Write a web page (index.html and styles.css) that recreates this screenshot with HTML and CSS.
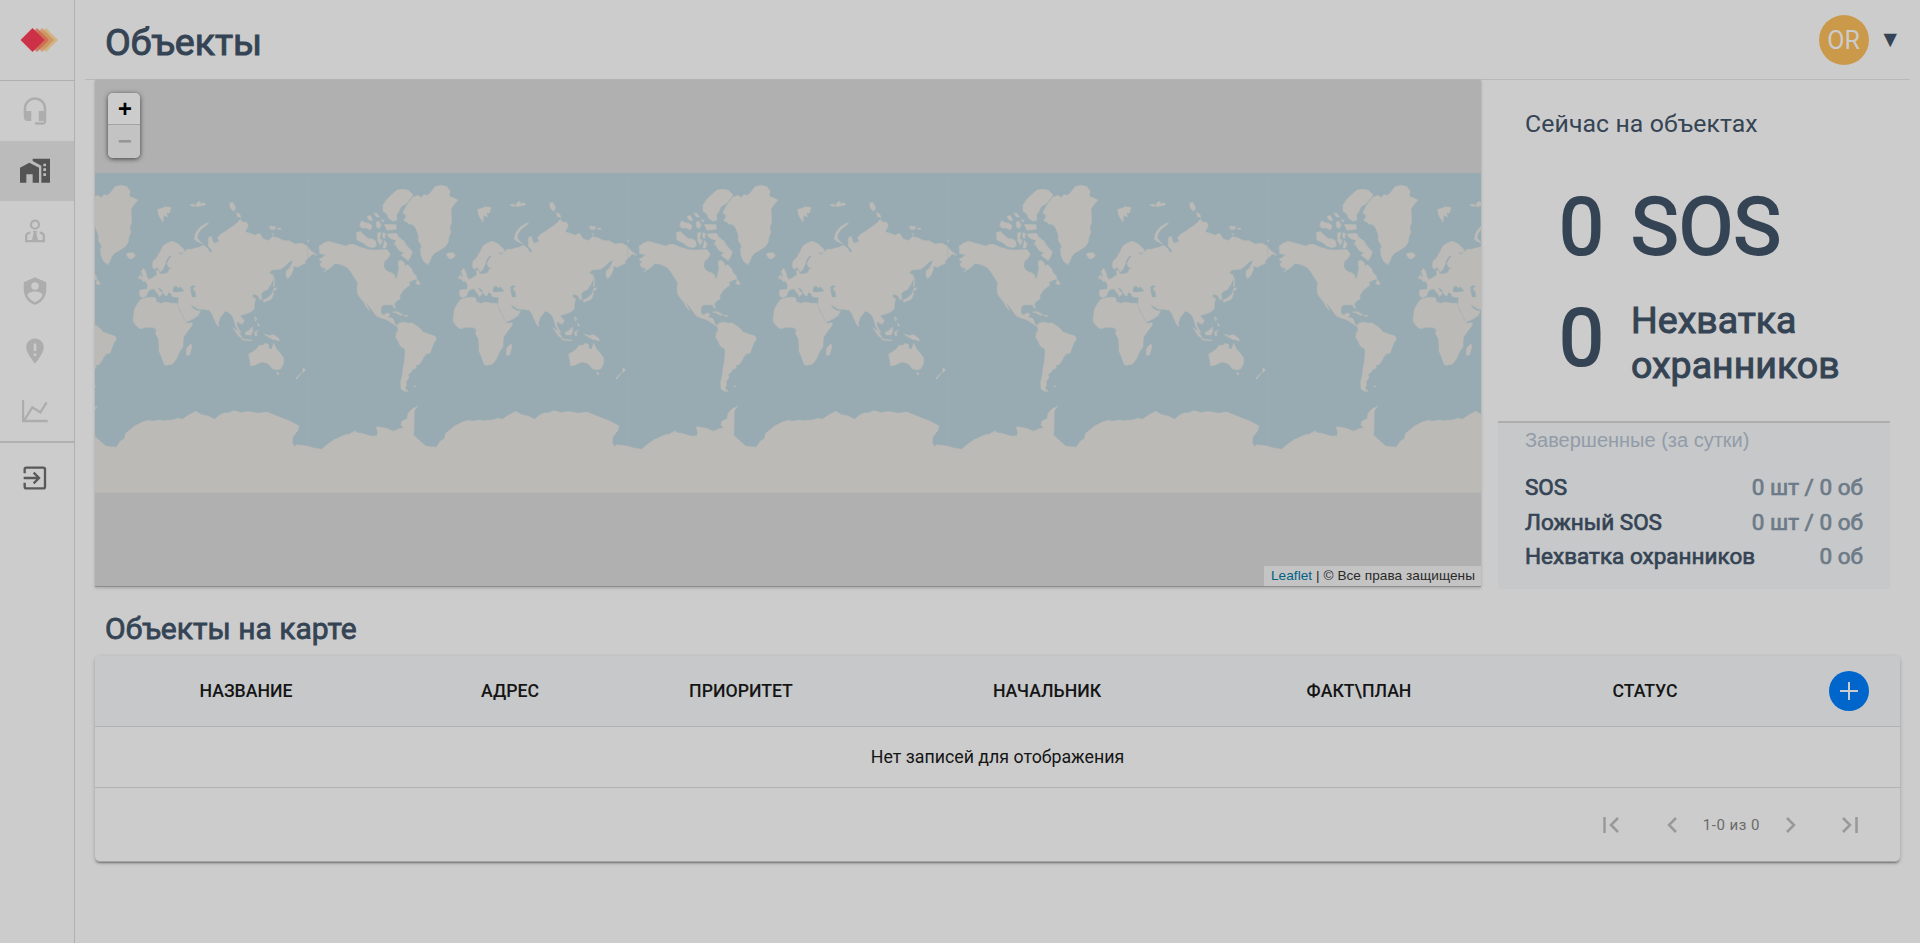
FILE: index.html
```html
<!DOCTYPE html>
<html lang="ru">
<head>
<meta charset="utf-8">
<title>Объекты</title>
<link rel="stylesheet" href="styles.css">
</head>
<body>
<div class="app">
  <nav class="sidebar">
    <a class="logo">
      <svg width="38" height="24" viewBox="0 0 38 24">
        <path d="M26 0L38 12L26 24L14 12Z" fill="#d3ab72" opacity=".75"/>
        <path d="M22 0L34 12L22 24L10 12Z" fill="#cf8b50" opacity=".7"/>
        <path d="M17 0L29 12L17 24L5 12Z" fill="#cd6450" opacity=".8"/>
        <path d="M12.500 0L24.500 12L12.500 24L.5 12Z" fill="#cc3147"/>
      </svg>
    </a>
    <a class="nav-item">
      <svg width="30" height="30" viewBox="0 0 24 24"><path d="M12 1c-4.970 0-9 4.030-9 9v7c0 1.660 1.340 3 3 3h3v-8H5v-2c0-3.870 3.130-7 7-7s7 3.130 7 7v2h-4v8h4v1h-7v2h6c1.660 0 3-1.340 3-3V10c0-4.970-4.030-9-9-9z"/></svg>
    </a>
    <a class="nav-item active">
      <svg width="30" height="26" viewBox="60 473 90 78"><path fill-rule="evenodd" d="M60 502L88 487L117 502V547H98V522H79V547H60ZM98 475H150V547H124V496L98 482ZM130 490v8h8v-8zM130 504v8h8v-8zM130 519v8h8v-8z"/></svg>
    </a>
    <a class="nav-item">
      <svg width="20" height="24" viewBox="75 657 60 72"><circle cx="105" cy="674" r="12" fill="none" stroke="#adadad" stroke-width="6.500"/><path d="M98 693H112L109 699L114 720H135V727H75V720H96L101 699Z"/><path d="M91 698Q78.500 700 78.500 709V724M119 698Q131.500 700 131.500 709V724" fill="none" stroke="#adadad" stroke-width="7"/></svg>
    </a>
    <a class="nav-item">
      <svg width="30" height="30" viewBox="0 0 24 24"><path d="M12 1L3 5V11C3 16.550 6.840 21.740 12 23C17.160 21.740 21 16.550 21 11V5L12 1M12 5A3 3 0 0 1 15 8A3 3 0 0 1 12 11A3 3 0 0 1 9 8A3 3 0 0 1 12 5M17.130 17C15.920 18.850 14.110 20.240 12 20.920C9.890 20.240 8.080 18.850 6.870 17C6.530 16.500 6.240 16 6 15.470C6 13.820 8.710 12.470 12 12.470C15.290 12.470 18 13.790 18 15.470C17.760 16 17.470 16.500 17.130 17Z"/></svg>
    </a>
    <a class="nav-item">
      <svg width="30" height="30" viewBox="0 0 24 24"><path fill-rule="evenodd" d="M12 2C8.100 2 5 5.100 5 9c0 5.200 7 13 7 13s7-7.800 7-13c0-3.900-3.100-7-7-7zM11 6h2v6h-2zM11 14h2v2h-2z"/></svg>
    </a>
    <a class="nav-item">
      <svg width="26" height="24" viewBox="66 447 78 72"><path d="M69 450V513H143M72 512L97 472L121 487L140 457" fill="none" stroke="#adadad" stroke-width="7"/></svg>
    </a>
    <a class="nav-item exit">
      <svg width="24" height="24" viewBox="69 648 72 72"><path d="M74 670V658Q74 653 79 653H130Q135 653 135 658V710Q135 715 130 715H79Q74 715 74 710V698M71 684H117M101 668L117 684L101 700" fill="none" stroke="#595959" stroke-width="7"/></svg>
    </a>
  </nav>
  <div class="page">
    <header class="topbar">
      <h1>Объекты</h1>
      <div class="user"><span class="avatar">OR</span><span class="caret">▼</span></div>
    </header>
    <main>
      <section class="overview">
        <div class="map">
          <svg class="world" width="1386" height="320" viewBox="0 0 1386 320">
            <defs>
              <g id="world" fill="#bbbab6" stroke="#bbbab6" stroke-width="1.500" stroke-linejoin="round">
                <path d="M37 222L50 213 65 208 85 214 118 222 128 217 140 217 160 226 190 234 215 234 238 232 246 240 250 248 240 262 232 268 230 285 238 296 255 303 262 308 265 319 270 318 272 305 276 290 273 270 280 264 290 270 295 282 302 278 314 290 318 302 328 312 330 322 318 324 306 330 308 340 300 345 292 352 285 360 278 372 280 380 268 388 262 396 266 410 260 406 256 398 238 398 226 400 222 410 222 424 230 430 238 424 247 424 248 430 242 436 255 438 262 448 262 456 270 460 278 458 276 464 264 460 250 450 236 442 222 438 208 432 198 418 186 402 176 390 188 416 180 408 170 390 160 378 152 366 150 350 152 332 146 322 138 310 130 298 120 286 108 280 95 276 84 274 76 282 66 290 50 300 58 290 44 286 38 276 46 270 36 262 50 254 54 248 38 244Z"/>
                <path d="M326 335L332 322 340 336 334 338ZM240 186L268 184 275 196 290 206 300 222 316 240 310 256 304 266 290 256 282 248 292 244 274 234 268 222 262 215 268 205 252 200 246 196ZM148 182L160 178 172 190 184 200 196 200 206 208 208 222 196 228 180 222 168 212 150 204ZM212 182L222 182 218 200 226 205 220 220 212 205ZM227 182L235 184 234 198 228 198ZM232 205L240 215 236 228 228 228Z"/>
                <path d="M228 100L238 84 256 66 270 54 288 52 304 55 318 68 308 84 296 96 282 104 276 118 268 130 270 144 260 148 246 140 238 124 228 118ZM232 157L267 158 268 172 240 175ZM158 160L164 146 174 152 186 154 196 162 190 174 178 168 164 168ZM200 122L212 126 218 136 208 134ZM180 134L190 130 198 146 186 144ZM208 150L216 148 222 160 216 170 208 164ZM222 142L232 146 228 151Z"/>
                <path d="M292 112L302 96 318 76 334 70 342 77 350 68 362 70 374 58 384 44 402 40 420 44 430 58 426 72 440 78 452 84 440 100 432 110 434 150 428 166 432 180 426 194 424 210 414 224 396 236 384 242 374 254 368 270 362 278 350 268 342 250 340 232 344 222 334 206 334 190 326 168 318 158 306 156 300 150 290 146 298 132 288 122ZM418 246L428 242 440 243 445 252 434 261 424 258Z"/>
                <path d="M256 420L272 419 288 429 280 430 270 424ZM290 429L304 431 296 434Z"/>
                <path d="M270 462L276 454 290 450 300 453 316 453 326 460 340 470 348 480 364 486 384 492 388 502 380 514 374 530 370 542 358 546 350 556 344 568 336 578 326 580 328 588 318 592 312 600 304 608 306 618 298 628 298 640 294 648 303 658 292 658 282 650 281 630 286 610 288 590 292 570 294 550 294 532 280 522 274 508 266 496 268 482 274 474ZM320 642h7v2h-7z"/>
                <path d="M0 822L20 828 44 832 60 818 80 804 110 790 128 786 144 776 150 782 165 784 190 792 210 792 212 782 208 764 236 768 260 778 276 770 290 768 282 760 284 748 300 740 304 722 316 710 332 703 322 716 320 790 340 808 356 822 370 824 388 826 400 808 412 800 416 784 440 764 466 750 484 745 496 748 516 744 532 746 556 744 572 739 586 742 604 730 626 718 644 728 664 732 682 742 700 728 714 722 724 723 740 716 750 718 762 722 784 718 798 721 814 724 839 720 864 730 884 738 910 748 936 762 932 776 918 794 916 812 922 824 930 818 960 822V962H0Z"/>
                <g transform="translate(444)">
                  <path d="M14 354L36 352 38 340 32 326 48 320 58 314 66 308 64 296 70 294 74 306 84 306 98 302 104 290 114 290 100 284 96 274 104 260 110 252 104 250 94 264 90 278 84 292 76 300 68 286 58 292 52 284 54 268 66 256 76 238 84 222 98 212 112 208 130 216 148 234 144 242 130 240 138 248 150 238 158 232 170 232 192 226 206 220 216 228 226 242 232 238 220 222 220 198 228 192 236 214 252 210 248 196 258 186 272 178 290 165 306 154 316 142 322 150 334 150 340 162 330 180 346 184 360 190 374 184 384 200 400 206 412 194 430 198 446 206 462 206 480 216 500 214 516 222 528 236 546 250 532 246 526 252 516 262 510 266 512 274 496 280 490 286 476 282 474 296 466 312 458 320 453 310 454 296 464 288 472 272 474 264 462 270 448 284 436 292 410 294 402 304 414 308 414 322 408 336 398 352 386 358 378 366 381 380 374 383 370 372 362 368 354 366 352 374 362 380 358 396 358 410 348 420 332 426 322 428 316 432 328 446 322 456 312 452 306 446 306 462 318 482 312 482 302 462 298 448 292 432 280 420 270 418 256 436 250 452 252 463 246 460 238 442 230 424 222 414 204 412 190 412 178 404 167 396 174 410 186 416 196 418 190 430 176 440 154 450 146 436 138 418 128 400 130 390 132 376 112 374 108 364 100 360 96 372 88 368 80 352 68 344 72 354 82 364 74 374 66 362 56 350 48 352 40 358 34 372 24 377 14 372Z"/>
                  <path d="M18 382L40 376 58 376 64 380 62 388 76 394 92 390 108 394 126 394 128 404 138 424 148 444 156 454 173 452 170 462 158 478 146 494 144 512 144 524 132 542 124 562 112 576 96 580 88 578 80 556 72 536 72 518 70 500 62 486 64 472 52 466 34 466 16 470 4 462-6 448-4 430-2 412 8 394Z"/>
                  <path d="M158 524L168 516 171 524 164 548 154 550 154 534ZM18 322L24 312 19 298 26 289 32 300 36 314 41 322 34 328 24 328ZM10 317L17 308 20 316 14 322ZM68 112L84 108 90 104 108 106 104 122 94 124 98 134 86 130 84 150 74 136 70 126ZM178 202L182 182 196 164 220 151 218 157 200 170 190 184 186 198 202 216 186 208Z"/>
                  <path d="M164 98L176 97 182 102 172 103ZM186 92L194 88 198 96 208 92 212 98 196 102 186 104 182 98ZM284 92L294 92 302 108 296 118 286 108ZM304 122L314 126 318 136 308 134ZM404 163L422 164 420 172 406 172ZM426 170L438 168 436 173ZM413 184L418 188 413 188ZM516 205L523 207 518 209Z"/>
                  <path d="M384 384L398 378 410 366 413 358 415 368 410 380 398 386 386 391ZM415 350L426 347 422 354 416 357ZM416 314L419 320 418 344 416 344ZM358 433L366 440 362 448ZM368 452L376 462 368 461ZM330 482L344 474 352 464 353 478 348 489 334 489ZM294 467L304 474 316 488 321 498 310 492ZM320 500L352 505 350 507 320 503ZM359 480L371 475 364 482 366 492 360 491ZM388 487L404 491 416 488 430 498 434 507 424 504 412 502 400 495Z"/>
                  <path d="M341 547L352 540 364 532 372 520 384 520 390 514 402 518 400 528 410 532 414 520 416 514 424 530 436 544 446 558 446 574 438 590 424 594 412 590 406 582 396 574 384 570 370 574 362 579 347 582 345 566ZM424 602L432 602 429 610ZM504 587L512 594 502 602ZM500 602L486 621 482 619Z"/>
                  <g fill="#98abb2" stroke="none"><path d="M113 358L116 344 124 342 130 348 138 344 148 358 134 359 120 361ZM166 346L174 340 181 342 174 350 182 362 182 375 172 376 168 364Z"/></g>
                </g>
              </g>
            </defs>
            <rect width="1386" height="320" fill="#98abb2"/>
            <g transform="scale(.33333) translate(0 -3)">
              <use href="#world" x="-324"/><use href="#world" x="636"/><use href="#world" x="1596"/><use href="#world" x="2556"/><use href="#world" x="3516"/>
            </g>
            <path d="M212.500 0V273M532.500 0V273M852.500 0V273M1172.500 0V273" stroke="#a2afb3" stroke-width="1" opacity=".4"/>
          </svg>
          <div class="zoom"><button class="zoom-in">+</button><button class="zoom-out">−</button></div>
          <div class="attribution"><a>Leaflet</a> | © Все права защищены</div>
        </div>
        <aside class="stats">
          <h2>Сейчас на объектах</h2>
          <div class="big-row"><b class="count">0</b><b class="sos">SOS</b></div>
          <div class="big-row second"><b class="count">0</b><b class="short">Нехватка<br>охранников</b></div>
          <div class="done">
            <h3>Завершенные (за сутки)</h3>
            <div class="line"><span>SOS</span><span class="val">0 шт / 0 об</span></div>
            <div class="line"><span>Ложный SOS</span><span class="val">0 шт / 0 об</span></div>
            <div class="line"><span>Нехватка охранников</span><span class="val">0 об</span></div>
          </div>
        </aside>
      </section>
      <h2 class="section-title">Объекты на карте</h2>
      <section class="card">
        <div class="thead">
          <span>НАЗВАНИЕ</span><span>АДРЕС</span><span>ПРИОРИТЕТ</span><span>НАЧАЛЬНИК</span><span>ФАКТ\ПЛАН</span><span>СТАТУС</span>
          <button class="add"><svg width="18" height="18" viewBox="0 0 18 18"><path d="M9 0V18M0 9H18" stroke="#ccc" stroke-width="2"/></svg></button>
        </div>
        <div class="empty">Нет записей для отображения</div>
        <div class="pager">
          <svg width="16" height="16" viewBox="0 0 16 16"><path d="M1.500 0V16M15 1L8 8L15 15"/></svg>
          <svg width="10" height="16" viewBox="0 0 10 16"><path d="M9 1L2 8L9 15"/></svg>
          <span>1-0 из 0</span>
          <svg width="10" height="16" viewBox="0 0 10 16"><path d="M1 1L8 8L1 15"/></svg>
          <svg width="16" height="16" viewBox="0 0 16 16"><path d="M14.500 0V16M1 1L8 8L1 15"/></svg>
        </div>
      </section>
    </main>
  </div>
</div>
</body>
</html>
```
FILE: styles.css
```css
* { box-sizing: border-box; }
body { margin: 0; background: #ccc; font-family: Roboto, "Liberation Sans", sans-serif; color: #354454; }
h1, h2, h3 { margin: 0; font-weight: 400; }
button { border: 0; padding: 0; font: inherit; }
svg { display: block; flex: none; }
.app { display: flex; height: 943px; overflow: hidden; }
.sidebar { width: 75px; border-right: 1px solid #b0b0b0; flex: none; }
.logo { display: flex; height: 81px; padding: 28px 0 0 20px; border-bottom: 1px solid #b0b0b0; }
.nav-item { display: flex; align-items: center; justify-content: center; height: 60px; padding-right: 4px; fill: #adadad; }
.nav-item.active { background: #bbb; fill: #545454; }
.nav-item.exit { border-top: 2px solid #b0b0b0; height: 72px; }
.page { flex: 1; padding: 0 10px; }
.topbar { display: flex; justify-content: space-between; align-items: center; height: 80px; padding: 0 13px 0 20px; border-bottom: 1px solid #b9b9b9; }
.topbar h1 { font-size: 37.5px; line-height: 50px; padding-top: 4px; -webkit-text-stroke: 1px; }
.user { display: flex; align-items: center; gap: 15px; }
.avatar { width: 50px; height: 50px; border-radius: 50%; background: #cb994a; color: #ccc; font-size: 25px; line-height: 51px; text-align: center; }
.caret { font: 17.5px/20px "DejaVu Sans", sans-serif; padding-bottom: 2px; }
main { padding: 0 10px; }
.overview { display: flex; height: 509px; }
.map { position: relative; width: 1386px; height: 507px; background: #b0b0b0; padding-top: 93px; overflow: hidden; flex: none; border-bottom: 1px solid #8d8d8d; box-shadow: 0 1px 3px rgba(0,0,0,.2); }
.zoom { position: absolute; left: 13px; top: 13px; width: 32px; height: 65px; border-radius: 5px; overflow: hidden; background: #ccc; box-shadow: 0 1px 5px rgba(0,0,0,.65); }
.zoom button { display: block; width: 32px; height: 32px; padding: 3px 0 0 2px; font: bold 24px/30px "Liberation Mono", monospace; color: #000; background: #ccc; text-align: center; }
.zoom .zoom-in { border-bottom: 1px solid #a3a3a3; }
.zoom .zoom-out { height: 33px; background: #c3c3c3; color: #959595; }
.attribution { position: absolute; right: 0; bottom: 0; padding: 0 6px 0 7px; height: 20px; background: #c4c4c4; font: 13.6px/19px "Liberation Sans", sans-serif; letter-spacing: .06px; color: #292929; white-space: nowrap; }
.attribution a { color: #006284; }
.stats { margin-left: 17px; width: 392px; display: flex; flex-direction: column; }
.stats h2 { font-size: 24.8px; line-height: 30px; padding: 29px 0 0 27px; height: 85px; letter-spacing: .1px; }
.big-row { display: flex; padding-left: 61px; height: 111px; }
.count, .sos { font-size: 80px; line-height: 124px; font-weight: 400; -webkit-text-stroke: 2px; }
.count { width: 72px; }
.big-row.second { height: 145px; }
.short { font-size: 37.5px; line-height: 45px; font-weight: 400; padding-top: 22px; -webkit-text-stroke: 1px; }
.done { height: 168px; background: #c6c8ca; border-top: 2px solid #adadad; padding: 4px 27px 0; }
.done h3 { font: 20px/26px "Liberation Sans", sans-serif; color: #929ca8; margin-bottom: 17px; }
.line { display: flex; justify-content: space-between; font-size: 22.5px; line-height: 34.5px; -webkit-text-stroke: .7px; }
.val { color: #6d7b88; }
.section-title { font-size: 30px; line-height: 40px; padding: 20px 0 0 10px; height: 67px; -webkit-text-stroke: .8px; }
.card { height: 206px; border-radius: 5px; border-bottom: 1px solid #a5a5a5; box-shadow: 0 2px 2px -1px rgba(0,0,0,.35), 0 1px 4px rgba(0,0,0,.2); overflow: hidden; color: #151515; }
.thead { display: grid; grid-template-columns: 302px 226px 236px 376px 248px 324px 84px; align-items: center; justify-items: center; height: 71px; background: #c6c8ca; border-bottom: 1px solid #b3b3b5; font-size: 17.7px; font-weight: 500; }
.thead span { padding-bottom: 1px; }
.add { width: 40px; height: 40px; border-radius: 50%; background: #0066cc; display: flex; align-items: center; justify-content: center; }
.empty { height: 61px; line-height: 60px; text-align: center; font-size: 17.8px; border-bottom: 1px solid #b3b3b5; }
.pager { display: flex; align-items: center; justify-content: flex-end; height: 74px; padding-right: 42px; }
.pager path { fill: none; stroke: #999; stroke-width: 2.500; }
.pager svg:nth-of-type(2) { margin-left: 48px; }
.pager svg:nth-of-type(4) { margin-left: 46px; }
.pager span { margin: 0 26px; font-size: 15px; letter-spacing: .5px; color: #6a6a6a; }
```
